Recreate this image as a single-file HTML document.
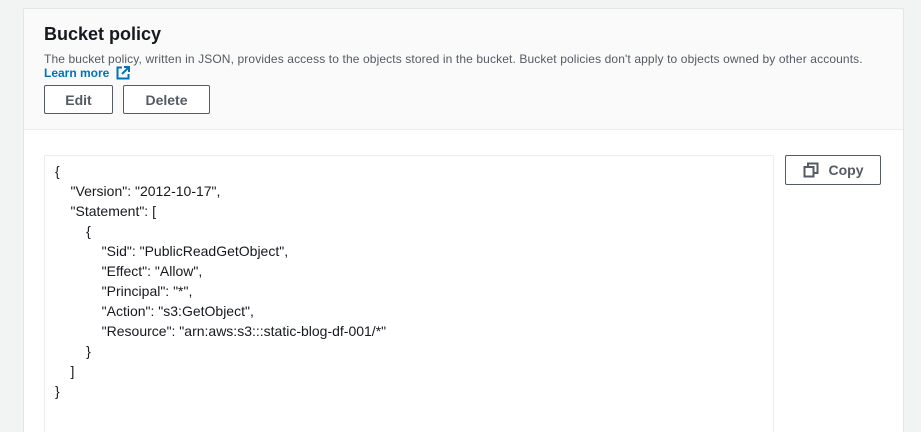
<!DOCTYPE html><html><head><style>
html,body{margin:0;width:921px;height:432px;overflow:hidden}
body{background:#f2f3f3;font-family:"Liberation Sans",sans-serif;position:relative}
.panel{position:absolute;left:23px;top:8px;width:879px;height:424px;background:#fff;border:1px solid #e4e6e6;border-bottom:none;border-radius:2px 2px 0 0;overflow:hidden}
.head{height:120px;background:#fafafa;border-bottom:1px solid #eaeded}
h2{position:absolute;left:20px;top:15px;margin:0;font-size:18px;font-weight:bold;color:#16191f}
.desc{position:absolute;left:20px;top:43px;font-size:12px;letter-spacing:0.12px;color:#545b64;white-space:nowrap}
.lm{position:absolute;left:20px;top:57px;font-size:12px;font-weight:bold;color:#0073bb}
.btn{position:absolute;height:29px;border:1px solid #545b64;border-radius:2px;background:#fff;color:#545b64;font-weight:bold;font-size:14px;display:flex;align-items:center;justify-content:center;box-sizing:border-box}
.code{position:absolute;left:20px;top:146px;width:730px;height:290px;border:1px solid #eaeded;border-radius:2px;box-sizing:border-box;padding:5px 0 0 10px;font-size:14px;color:#16191f;line-height:20px;white-space:pre}
</style></head><body>
<div class="panel"><div class="head"></div>
<h2>Bucket policy</h2>
<div class="desc">The bucket policy, written in JSON, provides access to the objects stored in the bucket. Bucket policies don't apply to objects owned by other accounts.</div>
<div class="lm">Learn more <svg width="14" height="14" viewBox="0 0 14 14" style="vertical-align:-3px;margin-left:3px"><path d="M6 1.5H1.5v11h11V8" fill="none" stroke="#0073bb" stroke-width="2"/><path d="M8 1h5v5M13 1L6 8" fill="none" stroke="#0073bb" stroke-width="2"/></svg></div>
<div class="btn" style="left:20px;top:76px;width:69px">Edit</div>
<div class="btn" style="left:99px;top:76px;width:87px">Delete</div>
<div class="code">{
    "Version": "2012-10-17",
    "Statement": [
        {
            "Sid": "PublicReadGetObject",
            "Effect": "Allow",
            "Principal": "*",
            "Action": "s3:GetObject",
            "Resource": "arn:aws:s3:::static-blog-df-001/*"
        }
    ]
}</div>
<div class="btn" style="left:761px;top:146px;width:96px;height:30px"><svg width="16" height="16" viewBox="0 0 16 16" style="margin-right:10px"><path d="M5 4V1.5h9.5v9.5h-3" fill="none" stroke="#545b64" stroke-width="2"/><rect x="1.5" y="5" width="9" height="9.5" fill="none" stroke="#545b64" stroke-width="2"/></svg>Copy</div>
</div>
</body></html>
